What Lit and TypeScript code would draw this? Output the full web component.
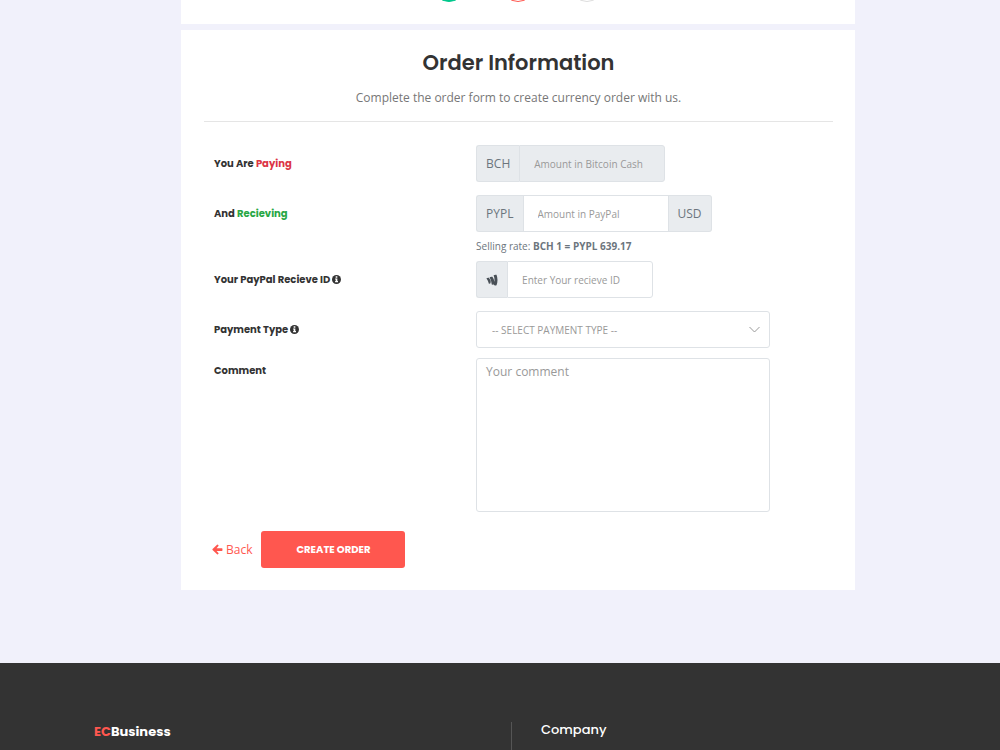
import { LitElement, html, css } from "lit";
import { customElement, property, state } from "lit/decorators.js";

const infoIcon = html`<svg class="info" viewBox="0 0 18 18" aria-hidden="true">
  <circle cx="9" cy="9" r="9"></circle>
  <path
    fill="#fff"
    d="M7.3 2.7h3.4v2.6H7.3zM6.2 6.8h4.5v5.1h1.3v2.4H6.2v-2.4h1.2V9.2H6.2z"
  ></path>
</svg>`;

const arrowIcon = html`<svg class="arrow" viewBox="0 0 20 20" aria-hidden="true">
  <path
    d="M1 9.300 9.200 1.200q.8-.7 1.500 0l1 1q.7.7 0 1.500L8.300 7.500H18q1 0 1 1v3q0 1-1 1H8.300l3.400 3.800q.7.8 0 1.500l-1 1q-.7.7-1.500 0L1 10.700q-.6-.7 0-1.400z"
  ></path>
</svg>`;

const walletIcon = html`<svg class="wallet" viewBox="0 0 24 24" aria-hidden="true">
  <path
    d="M.8 8.500q2.200-1.200 5-.8l3.700 5.800L9 18.500q-1.200 1.200-3.200.8Q4 13 .8 8.500z"
  ></path>
  <path
    d="M7.200 6.300q2.800-1.500 5.600-.8 3 4.400 4 9.300l-1.400 5.700q-1.600 1.200-3.900.6Q10.500 12.500 7.200 6.300z"
  ></path>
  <path
    d="M15.200 2.600Q18 .8 21 1.600q4 10.400 0 20.800-2 1-4.200.1l-2.600-2.700 2.700-6q.4-5.800-1.700-11.200z"
  ></path>
</svg>`;

const steps = ["done", "current", "next"];

@customElement("order-steps")
export class OrderSteps extends LitElement {
  static styles = css`
    :host {
      display: block;
      background: #fff;
      padding-bottom: 22px;
    }
    /* the page is scrolled down to the form, only the foot of the steps shows */
    ol {
      display: flex;
      justify-content: center;
      gap: 37px;
      list-style: none;
      margin: -30px 0 0;
      padding: 0;
    }
    li {
      box-sizing: border-box;
      width: 32px;
      height: 32px;
      border: 1px solid #ddd;
      border-radius: 50%;
    }
    .done {
      background: #00c78c;
      border-color: #00c78c;
    }
    .current {
      border-color: #ff574f;
    }
  `;

  render() {
    return html`<ol>
      ${steps.map((s) => html`<li class=${s}></li>`)}
    </ol>`;
  }
}

@customElement("order-form")
export class OrderForm extends LitElement {
  @property({ type: Number })
  rate = 639.17;

  @state()
  amount = "";

  static styles = css`
    :host {
      display: block;
      background: #fff;
      padding: 20px 22px 22px 23px;
      color: #777;
      font-size: 12px;
    }
    * {
      box-sizing: border-box;
    }
    h2 {
      margin: 0;
      color: #333;
      font-family: Poppins, Inter, sans-serif;
      font-size: 21px;
      line-height: 26px;
      font-weight: 600;
      text-align: center;
    }
    .intro {
      margin: 12px 0 0;
      padding-bottom: 13px;
      line-height: 20px;
      text-align: center;
      border-bottom: 1px solid #e5e5e5;
    }
    form {
      padding-top: 23px;
      margin: 0 -10px 0 10px;
    }
    .row {
      display: grid;
      grid-template-columns: 5fr 7fr;
      margin-bottom: 13px;
    }
    .row.tight {
      margin-bottom: 10px;
    }
    .label {
      color: #333;
      font-family: Poppins, Inter, sans-serif;
      font-size: 10px;
      font-weight: 700;
      line-height: 37px;
    }
    .row.top .label {
      line-height: 26px;
    }
    .paying {
      color: #dc3545;
    }
    .receiving {
      color: #28a745;
    }
    .group {
      display: flex;
      height: 37px;
    }
    .addon {
      display: flex;
      align-items: center;
      padding: 0 9px;
      color: #6c757d;
      background: #e9ecef;
      border: 1px solid #dee2e6;
    }
    .addon:first-child {
      border-right: 0;
      border-radius: 3px 0 0 3px;
    }
    .addon:last-child {
      border-left: 0;
      border-radius: 0 3px 3px 0;
    }
    input,
    select,
    textarea {
      font-family: inherit;
      color: #777;
      background: #fff;
      border: 1px solid #dee2e6;
      outline: none;
    }
    input {
      width: 146px;
      padding: 0 14px;
      font-size: 10px;
    }
    input:last-child {
      border-radius: 0 3px 3px 0;
    }
    input:disabled {
      background: #e9ecef;
    }
    ::placeholder {
      color: #999;
      opacity: 1;
    }
    .rate {
      margin: 5px 0 0;
      color: #6c757d;
      font-size: 10px;
      line-height: 18px;
    }
    .row.rated {
      margin-bottom: 6px;
    }
    .select {
      display: grid;
      align-items: center;
      width: 80%;
    }
    .select > * {
      grid-area: 1 / 1;
    }
    select {
      appearance: none;
      width: 100%;
      height: 37px;
      padding: 0 15px;
      color: #999;
      font-size: 10px;
      border-radius: 3px;
    }
    .chevron {
      justify-self: end;
      width: 11px;
      height: 7px;
      margin-right: 10px;
      fill: none;
      stroke: #999;
      pointer-events: none;
    }
    textarea {
      display: block;
      width: 80%;
      height: 154px;
      padding: 4px 9px;
      font-size: 12px;
      line-height: 18px;
      border-radius: 3px;
      resize: none;
    }
    .info {
      width: 9px;
      height: 9px;
      fill: #333;
      vertical-align: -1px;
    }
    .wallet {
      width: 12px;
      height: 12px;
      fill: #495057;
    }
    .arrow {
      width: 11px;
      height: 11px;
      fill: #ff574f;
    }
    .actions {
      display: flex;
      align-items: center;
      gap: 9px;
      padding-top: 6px;
      margin-left: -2px;
    }
    a {
      display: flex;
      align-items: center;
      gap: 3px;
      color: #ff574f;
      text-decoration: none;
    }
    button {
      height: 37px;
      padding: 0 35px;
      color: #fff;
      background: #ff574f;
      border: 0;
      border-radius: 3px;
      font-family: Poppins, Inter, sans-serif;
      font-size: 10px;
      font-weight: 700;
      text-transform: uppercase;
      cursor: pointer;
    }
  `;

  onInput(e: Event) {
    this.amount = (e.target as HTMLInputElement).value;
  }

  onSubmit(e: Event) {
    e.preventDefault();
  }

  render() {
    return html`<h2>Order Information</h2>
      <p class="intro">
        Complete the order form to create currency order with us.
      </p>
      <form @submit=${this.onSubmit}>
        <div class="row">
          <label class="label" for="pay"
            >You Are <span class="paying">Paying</span></label
          >
          <div class="group">
            <span class="addon">BCH</span>
            <input id="pay" placeholder="Amount in Bitcoin Cash" disabled />
          </div>
        </div>
        <div class="row rated">
          <label class="label" for="receive"
            >And <span class="receiving">Recieving</span></label
          >
          <div>
            <div class="group">
              <span class="addon">PYPL</span>
              <input
                id="receive"
                placeholder="Amount in PayPal"
                .value=${this.amount}
                @input=${this.onInput}
              />
              <span class="addon">USD</span>
            </div>
            <p class="rate">
              Selling rate: <strong>BCH 1 = PYPL ${this.rate}</strong>
            </p>
          </div>
        </div>
        <div class="row">
          <label class="label" for="account"
            >Your PayPal Recieve ID ${infoIcon}</label
          >
          <div class="group">
            <span class="addon">${walletIcon}</span>
            <input id="account" placeholder="Enter Your recieve ID" />
          </div>
        </div>
        <div class="row tight">
          <label class="label" for="type">Payment Type ${infoIcon}</label>
          <div class="select">
            <select id="type">
              <option>-- SELECT PAYMENT TYPE --</option>
            </select>
            <svg class="chevron" viewBox="0 0 11 7" aria-hidden="true">
              <path d="M.5 1 5.5 6 10.5 1"></path>
            </svg>
          </div>
        </div>
        <div class="row top">
          <label class="label" for="comment">Comment</label>
          <textarea id="comment" placeholder="Your comment"></textarea>
        </div>
        <div class="actions">
          <a href="#">${arrowIcon} Back</a>
          <button type="submit">Create Order</button>
        </div>
      </form>`;
  }
}

@customElement("app-root")
export class AppRoot extends LitElement {
  static styles = css`
    :host {
      display: flex;
      flex-direction: column;
      height: 100vh;
      overflow: hidden;
      background: #f1f1fb;
      font-family: "Open Sans", "Noto Sans", sans-serif;
    }
    main {
      display: grid;
      gap: 6px;
      flex: none;
      padding: 0 145px 73px 181px;
    }
    footer {
      display: grid;
      grid-template-columns: 1fr 1fr;
      flex: 1 0 auto;
      padding: 59px 72px 0 94px;
      color: #fff;
      background: #333;
      font-family: Poppins, Inter, sans-serif;
      font-size: 13px;
      line-height: 20px;
    }
    .brand {
      font-weight: 700;
    }
    .brand span {
      color: #ff574f;
    }
    .links {
      padding-left: 29px;
      border-left: 1px solid #555;
    }
    h3 {
      margin: 0;
      font-size: 13px;
      font-weight: 500;
      line-height: 16px;
    }
  `;

  render() {
    return html`<main>
        <order-steps></order-steps>
        <order-form></order-form>
      </main>
      <footer>
        <div class="brand"><span>EC</span>Business</div>
        <div class="links"><h3>Company</h3></div>
      </footer>`;
  }
}
